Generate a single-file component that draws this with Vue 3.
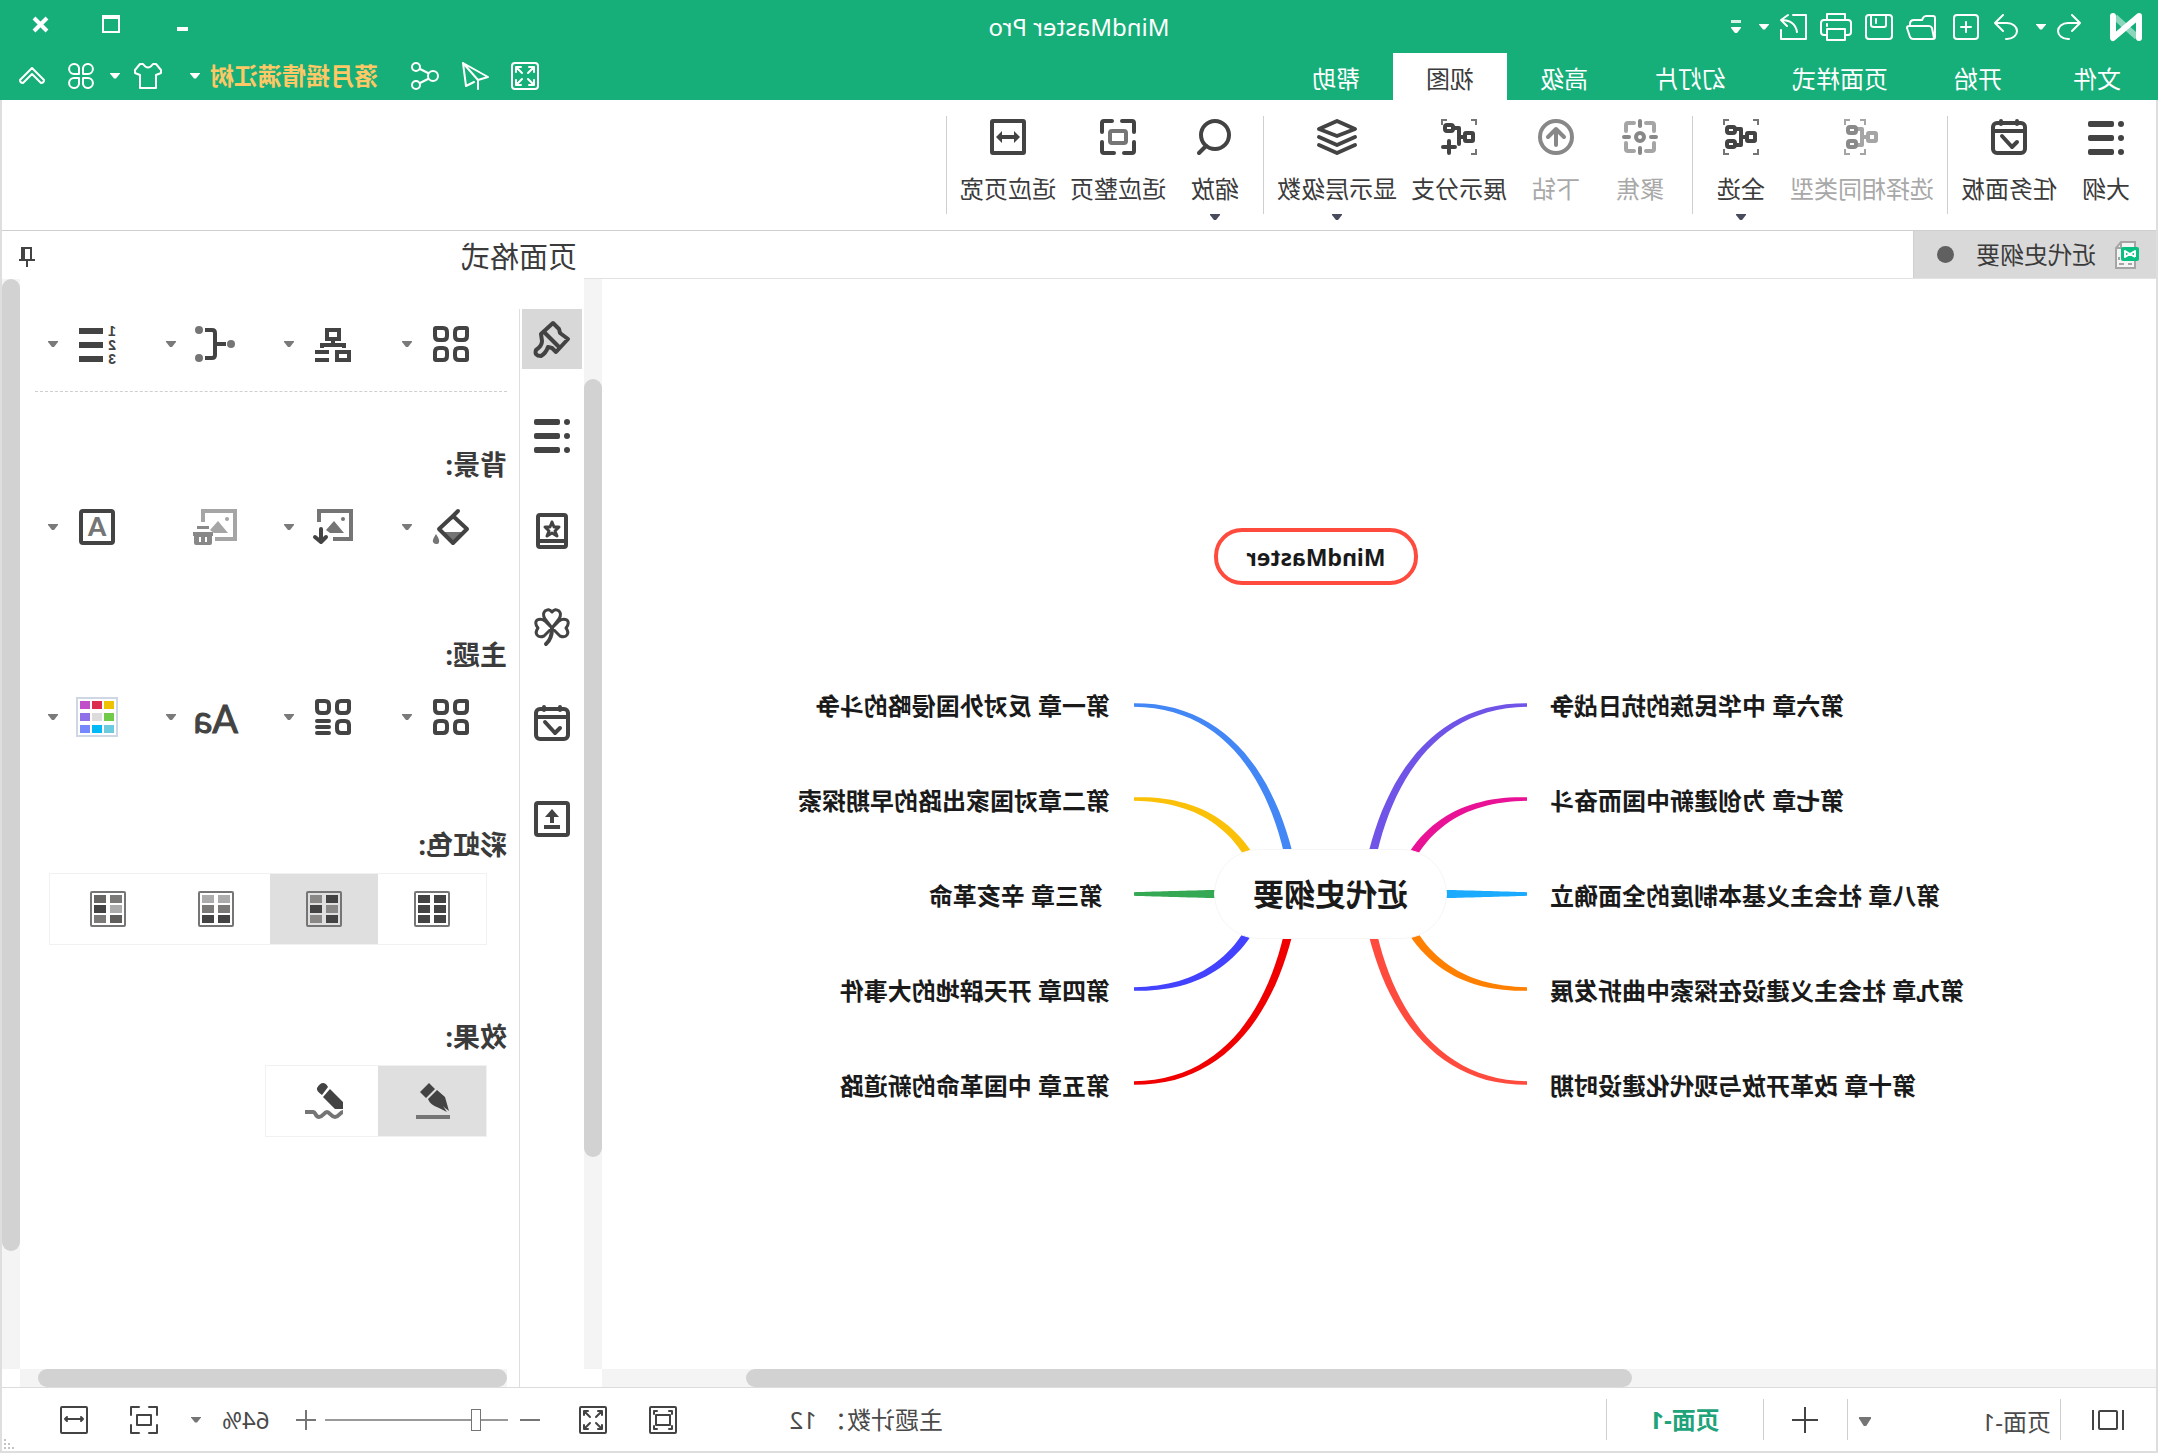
<script setup>
import { h, ref } from 'vue'

const dark = '#434343'
const mid = '#757575'

const stroke = (color, width, body) =>
  `<g fill="none" stroke="${color}" stroke-width="${width}" stroke-linecap="round" stroke-linejoin="round">${body}</g>`

const leaves = (skip) => {
  const cells = [
    'M3 2H10Q14 2 14 6V10Q14 14 10 14H6Q2 14 2 10V3Q2 2 3 2Z',
    'M33 2H26Q22 2 22 6V10Q22 14 26 14H30Q34 14 34 10V3Q34 2 33 2Z',
    'M3 34H10Q14 34 14 30V26Q14 22 10 22H6Q2 22 2 26V33Q2 34 3 34Z',
    'M33 34H26Q22 34 22 30V26Q22 22 26 22H30Q34 22 34 26V33Q34 34 33 34Z'
  ]
  return stroke(dark, 4, cells.slice(0, skip ? 3 : 4).map((d) => `<path d="${d}"/>`).join(''))
}

const outline =
  `<g fill="${dark}"><circle cx="3" cy="5" r="3"/><circle cx="3" cy="19" r="3"/><circle cx="3" cy="33" r="3"/>` +
  `<rect x="10" y="2" width="26" height="6" rx="2"/><rect x="10" y="16" width="26" height="6" rx="2"/><rect x="10" y="30" width="26" height="6" rx="2"/></g>`

const calendar =
  stroke(dark, 4, '<rect x="2" y="4" width="32" height="30" rx="4"/><path d="M2 12H34M10 2V5M26 2V5M10 23L15 28L25 17"/>')

const corners = (x0, color) =>
  `<path d="M${x0} 6V1H${x0 + 5}M30 1H35V6M35 30V35H30M${x0 + 5} 35H${x0}V30" fill="none" stroke="${color}" stroke-width="2"/>`

const branchNodes = (a, b) =>
  stroke(a, 4, '<rect x="4" y="14" width="8" height="8" rx="1"/><path d="M12 18H18M24 10H18V26H24"/>') +
  stroke(b, 4, '<rect x="24" y="8" width="8" height="6" rx="2"/><rect x="24" y="22" width="8" height="6" rx="2"/>')

const swatches = (colors) => {
  let s = `<rect x="1" y="1" width="34" height="34" rx="1" fill="none" stroke="${mid}" stroke-width="2"/>`
  colors.forEach((c, i) => {
    s += `<rect x="${4 + (i % 2) * 16}" y="${4 + Math.floor(i / 2) * 10}" width="12" height="8" fill="${c}"/>`
  })
  return s
}

const picture = (color, frame) =>
  `<path d="M34 13V2H2V30H${frame}" fill="none" stroke="${color}" stroke-width="4"/><circle cx="10" cy="10" r="2" fill="${color}"/><path d="M9 24L19 12L27 21L23 24Z" fill="${color}"/>`

const palette = ['#eec200', '#dc2c50', '#c04fc9', '#70cc48', '#dcdcdc', '#9070e8', '#6ccbdc', '#00b9f6', '#7788ff']

const icons = {
  logo: [32, 28, '<path d="M27 4L5 24" stroke="#fff" stroke-opacity=".5" stroke-width="6" fill="none"/><path d="M3 25V3L29 25V3" stroke="#fff" stroke-width="6" stroke-linejoin="round" stroke-linecap="round" fill="none"/>'],
  undo: [24, 26, stroke('#fff', 2, '<path d="M9 1L1 9L9 17M1 9H13C19 9 23 13 23 17S19 25 13 25H12"/>')],
  redo: [24, 26, stroke('#fff', 2, '<path d="M15 1L23 9L15 17M23 9H11C5 9 1 13 1 17S5 25 11 25H12"/>')],
  add: [26, 26, stroke('#fff', 2, '<rect x="1" y="1" width="24" height="24" rx="3"/><path d="M13 8V18M8 13H18"/>')],
  open: [30, 26, stroke('#fff', 2, '<path d="M1 23V4Q1 2 3 2H10Q12 2 13 4L14 6H22Q26 6 26 10V12M2 24L4 14Q5 12 7 12H27Q29 12 29 14L26 23Q25 25 23 25H3Q1 25 1 23"/>')],
  save: [28, 26, stroke('#fff', 2, '<rect x="1" y="1" width="26" height="24" rx="3"/><path d="M7 1V11Q7 13 9 13H19Q22 13 22 11V1M17 5V9"/>')],
  print: [32, 28, stroke('#fff', 2, '<path d="M7 7V1H25V7M7 22H4Q1 22 1 19V10Q1 7 4 7H28Q31 7 31 10V19Q31 22 28 22H25M7 16H25V27H7ZM25 11V13"/>')],
  share: [27, 26, stroke('#fff', 2, '<path d="M14 1H1V25H26V16M10 18Q12 6 26 6M19 1L26 6L20 12"/>')],
  min: [16, 18, '<rect y="12" width="11" height="4" fill="#fff"/>'],
  max: [18, 18, '<path d="M0 0H18V18H0ZM2 4V16H16V4Z" fill="#fff" fill-rule="evenodd"/>'],
  close: [18, 18, '<path d="M3 3L16 16M16 3L3 16" stroke="#fff" stroke-width="4"/>'],
  expand: [28, 28, stroke('#fff', 2, '<rect x="1" y="1" width="26" height="26" rx="3"/><path d="M5 10V5H10M5 5L11 11M18 5H23V10M23 5L17 11M5 18V23H10M5 23L11 17M23 18V23H18M23 23L17 17"/>')],
  send: [28, 30, stroke('#fff', 2, '<path d="M26 2L1 16L11 19V28M11 19L26 2L23 25L15 21"/>')],
  nodes: [28, 28, stroke('#fff', 2, '<circle cx="6" cy="14" r="5"/><circle cx="23" cy="5" r="4"/><circle cx="23" cy="23" r="4"/><path d="M11 11L19 7M11 17L19 21"/>')],
  shirt: [28, 26, stroke('#fff', 2, '<path d="M9 1Q14 8 19 1L22 1L27 7V10L22 12V25H6V12L1 10V7L6 1Z"/>')],
  petals: [28, 28, stroke('#fff', 2, '<path d="M12 12V6A5 5 0 1 0 7 12ZM16 12V6A5 5 0 1 1 21 12ZM12 16V22A5 5 0 1 1 7 16ZM16 16V22A5 5 0 1 0 21 16Z"/>')],
  fold: [26, 18, stroke('#fff', 2, '<path d="M13 1L25 13Q25 16 22 16L13 7L4 16Q1 16 1 13Z"/>')],
  outline: [36, 36, outline],
  calendar: [36, 36, calendar],
  same: [36, 36, corners(15, '#a5a5a5') + branchNodes('#a5a5a5', '#8a8a8a')],
  all: [36, 36, corners(1, mid) + branchNodes(dark, dark)],
  focus: [36, 36, stroke('#a5a5a5', 4, '<path d="M4 12V6Q4 4 6 4H12M24 4H30Q32 4 32 6V12M32 24V30Q32 32 30 32H24M12 32H6Q4 32 4 30V24"/>') + stroke('#888', 4, '<circle cx="18" cy="18" r="4"/><path d="M18 2V7M18 29V34M2 18H7M29 18H34"/>')],
  drill: [36, 36, stroke('#888', 4, '<circle cx="18" cy="18" r="16"/><path d="M18 26V10M10 18L18 10L26 18"/>')],
  branchAdd: [36, 36, '<path d="M1 6V1H6M30 1H35V6M6 35H1V30" fill="none" stroke="#757575" stroke-width="2"/>' + stroke(dark, 4, '<rect x="4" y="14" width="8" height="8" rx="1"/><rect x="24" y="6" width="8" height="6" rx="2"/><path d="M12 18H18M24 9H18V25M28 22V34M22 28H34"/>')],
  layers: [40, 36, stroke(dark, 4, '<path d="M20 2L38 10L20 17L2 10ZM2 18L20 26L38 18M2 26L20 34L38 26"/>')],
  zoom: [36, 36, stroke(dark, 4, '<circle cx="18" cy="16" r="14"/><path d="M27 27L34 34"/>')],
  fitPage: [36, 36, stroke(mid, 4, '<rect x="10" y="12" width="16" height="12" rx="2"/>') + stroke(dark, 4, '<path d="M2 13V4Q2 2 4 2H14M24 2H32Q34 2 34 4V13M34 23V32Q34 34 32 34H22M12 34H4Q2 34 2 32V23"/>')],
  fitWidth: [36, 36, `<rect x="2" y="2" width="32" height="32" rx="1" fill="none" stroke="${dark}" stroke-width="4"/><path d="M6 18L12 12V16H24V12L30 18L24 24V20H12V24Z" fill="${dark}"/>`],
  doc: [26, 28, '<path d="M4 1H18L23 7V27H4Z" fill="#f4f4f4" stroke="#a5a5a5" stroke-width="2"/><path d="M18 1V7H23M7 23H11M15 23H20M20 16V19" fill="none" stroke="#a5a5a5" stroke-width="2"/><rect y="6" width="18" height="14" rx="2" fill="#0abf83"/><path d="M4 16V10L14 16V10L4 16" fill="none" stroke="#fff" stroke-width="2" stroke-linejoin="round"/>'],
  pin: [16, 20, `<path d="M4 13V1H12V13M0 13H16M8 13V20" fill="none" stroke="${dark}" stroke-width="2"/><path d="M12 0V13" stroke="${dark}" stroke-width="4"/>`],
  brush: [38, 38, stroke(dark, 4, '<path d="M18 3L12 9L11 13L3 19L15 32L19 28L23 27Q25 33 30 36Q37 36 35 30Q29 26 29 21L30 14Z"/><path d="M27 12L12 27"/>')],
  book: [32, 36, stroke(dark, 4, '<rect x="2" y="2" width="28" height="32" rx="2"/><path d="M2 28H30"/>') + stroke(dark, 3, '<path d="M16 9L18 14L23 14L19 18L21 23L16 20L11 23L13 18L9 14L14 14Z"/>')],
  clover: [36, 38, stroke(dark, 3, '<path d="M18 20L11 11Q8 6 11 3Q15 0 18 4Q21 0 25 3Q28 6 25 11ZM18 20L10 28Q5 30 3 27Q1 24 4 20Q0 15 3 12Q7 10 11 13ZM18 20L26 28Q31 30 33 27Q35 24 32 20Q36 15 33 12Q29 10 25 13Z"/>') + stroke(dark, 4, '<path d="M18 20Q18 31 24 36"/>')],
  upload: [36, 36, stroke(dark, 4, '<rect x="2" y="2" width="32" height="32" rx="2"/>') + `<path d="M18 8L25 16H20V22H16V16H11ZM10 24H26V28H10Z" fill="${dark}"/>`],
  grid: [36, 36, leaves(false)],
  gridList: [36, 36, leaves(true) + stroke(dark, 4, '<path d="M22 22H34M22 28H34M22 34H34"/>')],
  org: [36, 36, `<path d="M12 4H24V13H12ZM2 26H14V34H2ZM18 13V19M7 22V19H29V22M22 26H36M22 34H36" fill="none" stroke="${dark}" stroke-width="4"/>`],
  bracket: [40, 36, `<g fill="${mid}"><circle cx="4" cy="18" r="4"/><circle cx="36" cy="4" r="4"/><circle cx="36" cy="32" r="4"/></g><path d="M9 18H20M30 4H23Q20 4 20 7V29Q20 32 23 32H30" fill="none" stroke="${dark}" stroke-width="4"/>`],
  numbers: [36, 40, `<g fill="${dark}"><rect x="12" y="4" width="24" height="6"/><rect x="12" y="18" width="24" height="6"/><rect x="12" y="32" width="24" height="6"/></g><g fill="${dark}" font-family="Liberation Sans, sans-serif" font-weight="700" font-size="14"><text x="-1" y="12">1</text><text x="-1" y="26">2</text><text x="-1" y="40">3</text></g>`],
  bucket: [38, 36, `<path d="M4 23H30L17 35Z" fill="${mid}"/><path d="M34 25Q38 31 37 33Q36 35 34 35Q31 35 31 33Q30 31 34 25Z" fill="${mid}"/>` + stroke(dark, 4, '<path d="M17 7L31 20L17 34L3 20ZM19 9L12 2"/>')],
  picDown: [40, 36, picture(mid, 20) + stroke(dark, 4, '<path d="M32 20V33M27 28L32 33L38 28"/>')],
  picTrash: [44, 36, picture('#a5a5a5', 22) + '<path d="M24 23H44V27H43V34Q43 36 41 36H27Q25 36 25 34V27H24ZM28 17H40V20H28Z" fill="#888"/><path d="M31 28V33M37 28V33" stroke="#fff" stroke-width="2"/>'],
  letter: [36, 36, stroke(dark, 4, '<rect x="2" y="2" width="32" height="32" rx="2"/>') + `<text x="18" y="27" text-anchor="middle" fill="${mid}" font-family="Lato, sans-serif" font-weight="900" font-size="26">A</text>`],
  font: [46, 36, `<text x="0" y="34" fill="${dark}" stroke="${dark}" font-family="Lato, sans-serif" font-weight="400" font-size="38">Aa</text>`],
  palette: [42, 40, '<rect x="1" y="1" width="40" height="38" fill="#fff" stroke="#cfd6e6" stroke-width="2"/>' + palette.map((c, i) => `<rect x="${4 + (i % 3) * 12}" y="${4 + Math.floor(i / 3) * 12}" width="10" height="8" fill="${c}"/>`).join('')],
  rb1: [36, 36, swatches([dark, dark, dark, dark, dark, dark])],
  rb2: [36, 36, swatches([dark, '#8a8787', '#8a8787', dark, dark, '#8a8787'])],
  rb3: [36, 36, swatches(['#acacac', '#acacac', '#7c7979', '#7c7979', dark, dark])],
  rb4: [36, 36, swatches(['#7c7979', '#686565', '#acacac', dark, '#605d5d', '#7c7979'])],
  pen: [36, 36, `<path d="M0 32H34V36H0Z" fill="${mid}"/><path d="M21 0L15 6L24 15L30 9ZM13 7L22 16Q20 22 11 25L3 29L7 23L5 25L1 28L5 14Z" fill="${dark}"/>`],
  pencil: [40, 36, `<path d="M21 0Q24 0 27 5Q28 8 22 12L16 4Q18 0 21 0ZM14 6L21 14L9 26H1V19Z" fill="${dark}"/><path d="M1 29C4 29 5 34 9 34S14 29 17 29S21 34 25 34S28 29 31 29H39" fill="none" stroke="${mid}" stroke-width="4"/>`],
  pages: [32, 22, `<path d="M1 1V21M31 1V21" stroke="${dark}" stroke-width="2"/><rect x="7" y="2" width="18" height="18" rx="1" fill="none" stroke="${dark}" stroke-width="2"/>`],
  plusBig: [26, 26, `<path d="M13 0V26M0 13H26" stroke="${dark}" stroke-width="2"/>`],
  minus: [20, 20, `<path d="M0 10H20" stroke="${mid}" stroke-width="2"/>`],
  plus: [20, 20, `<path d="M0 10H20M10 0V20" stroke="${mid}" stroke-width="2"/>`],
  sFit: [28, 28, stroke(dark, 2, '<rect x="1" y="1" width="26" height="26" rx="1"/><rect x="7" y="9" width="14" height="10"/><path d="M5 8V5H8M20 5H23V8M23 20V23H20M8 23H5V20"/>')],
  sFull: [28, 28, stroke(dark, 2, '<rect x="1" y="1" width="26" height="26" rx="1"/><path d="M5 9V5H9M5 5L11 11M19 5H23V9M23 5L17 11M5 19V23H9M5 23L11 17M23 19V23H19M23 23L17 17"/>')],
  sPage: [28, 28, stroke(dark, 2, '<path d="M1 9V1H9M19 1H27V9M27 19V27H19M9 27H1V19"/><rect x="7" y="9" width="14" height="10"/>')],
  sWidth: [28, 28, stroke(dark, 2, '<rect x="1" y="1" width="26" height="26" rx="1"/><path d="M5 13H23M7 11L5 13L7 15M21 11L23 13L21 15"/>')],
  grip: [10, 10, '<path d="M0 8H2V10H0ZM4 8H6V10H4ZM8 8H10V10H8ZM4 4H6V6H4ZM8 4H10V6H8ZM8 0H10V2H8Z" fill="#c4c4c4"/>']
}

// Small functional component that renders one icon from the table above.
const Icon = (props) => {
  const [w, ht, body] = icons[props.name]
  return h('svg', { class: 'icon', width: w, height: ht, viewBox: `0 0 ${w} ${ht}`, innerHTML: body, 'aria-hidden': 'true' })
}
Icon.props = ['name']

const menus = ['文件', '开始', '页面样式', '幻灯片', '高级', '视图', '帮助']
const activeMenu = ref('视图')

const ribbon = [
  [{ t: '大纲', i: 'outline' }, { t: '任务面板', i: 'calendar' }],
  [{ t: '选择相同类型', i: 'same', off: true }, { t: '全选', i: 'all', more: true }],
  [{ t: '聚焦', i: 'focus', off: true }, { t: '下钻', i: 'drill', off: true }, { t: '展示分支', i: 'branchAdd' }, { t: '显示层级数', i: 'layers', more: true }],
  [{ t: '缩放', i: 'zoom', more: true }, { t: '适应整页', i: 'fitPage' }, { t: '适应页宽', i: 'fitWidth' }]
]

const sideTools = [
  { i: 'brush', t: '格式' }, { i: 'outline', t: '列表' }, { i: 'book', t: '图标' },
  { i: 'clover', t: '剪贴画' }, { i: 'calendar', t: '任务' }, { i: 'upload', t: '导出' }
]
const layoutTools = [{ i: 'grid', more: true }, { i: 'org', more: true }, { i: 'bracket', more: true }, { i: 'numbers', more: true }]
const sections = [
  { title: '背景:', tools: [{ i: 'bucket', more: true }, { i: 'picDown', more: true }, { i: 'picTrash' }, { i: 'letter', more: true }] },
  { title: '主题:', tools: [{ i: 'grid', more: true }, { i: 'gridList', more: true }, { i: 'font', more: true }, { i: 'palette', more: true }] }
]
const rainbow = ref('rb2')
const effect = ref('pen')
const zoom = ref(64)

// Branch geometry on the free canvas, one entry per chapter.
const shapes = [
  [[670, 352], [690, 270], [738, 205], [824, 205]],
  [[710, 354], [736, 314], [775, 299], [824, 299]],
  [[740, 394], [770, 394], [800, 394], [824, 394]],
  [[710, 433], [736, 473], [775, 489], [824, 489]],
  [[670, 435], [690, 517], [738, 583], [824, 583]]
]
const flip = (pts) => pts.map(([x, y]) => [1255 - x, y])
const taper = (pts) => {
  const up = []
  const down = []
  for (let k = 0; k <= 24; k++) {
    const t = k / 24
    const s = 1 - t
    const at = (a) => s * s * s * pts[0][a] + 3 * s * s * t * pts[1][a] + 3 * s * t * t * pts[2][a] + t * t * t * pts[3][a]
    const d = (a) => s * s * (pts[1][a] - pts[0][a]) + 2 * s * t * (pts[2][a] - pts[1][a]) + t * t * (pts[3][a] - pts[2][a])
    const len = Math.hypot(d(0), d(1))
    const half = 4.2 - 2.4 * t
    const nx = (-d(1) / len) * half
    const ny = (d(0) / len) * half
    up.push(`${(at(0) + nx).toFixed(1)} ${(at(1) + ny).toFixed(1)}`)
    down.unshift(`${(at(0) - nx).toFixed(1)} ${(at(1) - ny).toFixed(1)}`)
  }
  return `M${up.join('L')}L${down.join('L')}Z`
}
const rightColors = ['#4287f5', '#fbc108', '#34a853', '#4242ff', '#f00000']
const leftColors = ['#7054e8', '#e91195', '#1aabff', '#ff7f00', '#ff4b3e']
const branches = [
  ...shapes.map((p, i) => ({ d: taper(p), fill: rightColors[i] })),
  ...shapes.map((p, i) => ({ d: taper(flip(p)), fill: leftColors[i] }))
]
const rowTop = [190, 285, 380, 475, 570]
const rightTopics = ['第一章 反对外国侵略的斗争', '第二章对国家出路的早期探索', '第三章 辛亥革命', '第四章 开天辟地的大事件', '第五章 中国革命的新道路']
const leftTopics = ['第六章 中华民族的抗日战争', '第七章 为创建新中国而奋斗', '第八章 社会主义基本制度的全面确立', '第九章 社会主义建设在探索中曲折发展', '第十章 改革开放与现代化建设时期']
</script>

<template>
  <div class="window">
    <header class="top">
      <div class="titlebar">
        <div class="quick">
          <Icon class="logo" name="logo" />
          <button aria-label="撤销"><Icon name="undo" /></button>
          <button class="drop" aria-label="撤销列表"><i class="caret"></i></button>
          <button aria-label="重做"><Icon name="redo" /></button>
          <button aria-label="新建"><Icon name="add" /></button>
          <div class="files">
            <button aria-label="打开"><Icon name="open" /></button>
            <button aria-label="保存"><Icon name="save" /></button>
            <button aria-label="打印"><Icon name="print" /></button>
            <button aria-label="导出"><Icon name="share" /></button>
          </div>
          <button class="drop" aria-label="导出列表"><i class="caret"></i></button>
          <button class="custom" aria-label="自定义"><i class="bar"></i><i class="caret"></i></button>
        </div>
        <h1>MindMaster Pro</h1>
        <div class="controls">
          <button aria-label="最小化"><Icon name="min" /></button>
          <button aria-label="最大化"><Icon name="max" /></button>
          <button aria-label="关闭"><Icon name="close" /></button>
        </div>
      </div>
      <div class="menubar">
        <nav>
          <button v-for="m in menus" :key="m" :class="{ on: m === activeMenu }" @click="activeMenu = m">{{ m }}</button>
        </nav>
        <div class="account">
          <button aria-label="全屏"><Icon name="expand" /></button>
          <button aria-label="发送"><Icon name="send" /></button>
          <button aria-label="分享"><Icon name="nodes" /></button>
          <button class="user">落月摇情满江树<i class="caret"></i></button>
          <button class="wide" aria-label="皮肤"><Icon name="shirt" /><i class="caret"></i></button>
          <button aria-label="应用"><Icon name="petals" /></button>
          <button aria-label="收起"><Icon name="fold" /></button>
        </div>
      </div>
    </header>

    <div class="frame">
      <div class="ribbon">
        <div v-for="(g, gi) in ribbon" :key="gi" class="group">
          <button v-for="b in g" :key="b.t" :disabled="b.off">
            <Icon :name="b.i" />
            <span>{{ b.t }}</span>
            <i v-if="b.more" class="caret"></i>
          </button>
        </div>
      </div>

      <div class="body">
        <main>
          <div class="docs">
            <button class="doc"><Icon name="doc" /><span>近代史纲要</span><i class="dot"></i></button>
          </div>
          <div class="work">
            <div class="canvas">
              <div class="map">
                <svg class="lines" width="1255" height="620" viewBox="0 0 1255 620">
                  <path v-for="b in branches" :key="b.fill" :d="b.d" :fill="b.fill" />
                </svg>
                <div class="node float">MindMaster</div>
                <div class="node core">近代史纲要</div>
                <div v-for="(t, i) in leftTopics" :key="t" class="topic left" :style="{ top: rowTop[i] + 'px' }">{{ t }}</div>
                <div v-for="(t, i) in rightTopics" :key="t" class="topic" :class="{ inset: i === 2 }" :style="{ top: rowTop[i] + 'px' }">{{ t }}</div>
              </div>
            </div>
            <div class="vbar"><div class="thumb canvas-v"></div></div>
          </div>
          <div class="hbar"><div class="thumb canvas-h"></div></div>
        </main>

        <aside>
          <div class="panel-head"><h2>页面格式</h2><button aria-label="固定"><Icon name="pin" /></button></div>
          <div class="panel">
            <div class="tools">
              <button v-for="(s, i) in sideTools" :key="s.t" :class="{ on: i === 0 }" :aria-label="s.t"><Icon :name="s.i" /></button>
            </div>
            <div class="sheet">
              <div class="options">
                <div class="row first">
                  <button v-for="o in layoutTools" :key="o.i" :aria-label="o.i"><span class="slot"><Icon :name="o.i" /></span><i v-if="o.more" class="caret"></i></button>
                </div>
                <section v-for="s in sections" :key="s.title">
                  <h3>{{ s.title }}</h3>
                  <div class="row">
                    <button v-for="o in s.tools" :key="o.i" :disabled="!o.more" :aria-label="o.i"><span class="slot"><Icon :name="o.i" /></span><i v-if="o.more" class="caret"></i></button>
                  </div>
                </section>
                <section class="choice">
                  <h3>彩虹色:</h3>
                  <div class="seg">
                    <button v-for="k in ['rb1', 'rb2', 'rb3', 'rb4']" :key="k" :class="{ on: k === rainbow }" :aria-label="k" @click="rainbow = k"><Icon :name="k" /></button>
                  </div>
                </section>
                <section class="choice">
                  <h3>效果:</h3>
                  <div class="seg">
                    <button v-for="k in ['pen', 'pencil']" :key="k" :class="{ on: k === effect }" :aria-label="k" @click="effect = k"><Icon :name="k" /></button>
                  </div>
                </section>
              </div>
              <div class="hbar sheet-bar"><div class="thumb"></div></div>
            </div>
            <div class="vbar last"><div class="thumb panel-v"></div></div>
          </div>
        </aside>
      </div>

      <footer>
        <button class="view" aria-label="页面视图"><Icon name="pages" /></button>
        <label class="picker">
          <select aria-label="页面"><option>页面-1</option></select>
          <i class="caret"></i>
        </label>
        <button class="new" aria-label="新建页面"><Icon name="plusBig" /></button>
        <button class="page">页面-1</button>
        <div class="count">主题计数： 12</div>
        <button class="fit" aria-label="适应窗口"><Icon name="sFit" /></button>
        <button class="full" aria-label="全屏"><Icon name="sFull" /></button>
        <button aria-label="缩小"><Icon name="minus" /></button>
        <input v-model="zoom" type="range" min="0" max="400" aria-label="缩放" />
        <button aria-label="放大"><Icon name="plus" /></button>
        <button class="percent">{{ zoom }}%<i class="caret"></i></button>
        <button class="fit" aria-label="整页"><Icon name="sPage" /></button>
        <button aria-label="页宽"><Icon name="sWidth" /></button>
        <Icon class="grip" name="grip" />
      </footer>
    </div>
  </div>
</template>

<style>
body {
  background: #fff;
}
#app {
  overflow: hidden;
}
</style>

<style scoped>
.window {
  display: flex;
  flex-direction: column;
  height: 100vh;
  transform: scaleX(-1);
  font: 24px/32px "Noto Sans", "Noto Sans CJK SC", sans-serif;
  color: #3b3b3b;
  background: #fff;
}
.window * {
  box-sizing: border-box;
}
button,
select {
  display: flex;
  align-items: center;
  justify-content: center;
  margin: 0;
  padding: 0;
  border: 0;
  background: none;
  font: inherit;
  color: inherit;
  white-space: nowrap;
}
h1,
h2,
h3 {
  margin: 0;
  font-size: 24px;
  font-weight: 400;
}
.icon {
  display: block;
  flex: none;
  overflow: visible;
}
.caret {
  flex: none;
  width: 10px;
  height: 6px;
  background: currentColor;
  clip-path: polygon(0 0, 100% 0, 100% 17%, 60% 100%, 40% 100%, 0 17%);
}

.top {
  flex: none;
  height: 100px;
  background: #16ae79;
  color: #fff;
}
.titlebar {
  display: grid;
  grid-template-columns: 1fr auto 1fr;
  align-items: center;
  height: 53px;
}
.quick {
  display: flex;
  align-items: center;
  gap: 15px;
  padding-left: 16px;
}
.logo {
  margin-right: 14px;
}
.files {
  display: flex;
  align-items: center;
  gap: 13px;
  padding-left: 2px;
}
.drop {
  margin: 0 3px 0 -4px;
}
.custom {
  flex-direction: column;
  gap: 4px;
}
.bar {
  width: 10px;
  height: 3px;
  background: #d5f0e5;
}
.controls {
  display: flex;
  justify-content: flex-end;
  gap: 52px;
  padding: 0 32px 6px 0;
}
.menubar {
  display: flex;
  justify-content: space-between;
}
nav {
  display: flex;
  padding-left: 4px;
}
nav button {
  height: 47px;
  padding: 4px 33px 0;
}
nav button:first-child {
  padding-right: 38px;
}
nav .on {
  background: #fff;
  color: #3b3b3b;
}
.account {
  display: flex;
  align-items: center;
  gap: 22px;
  padding: 0 19px 2px 0;
}
.user {
  gap: 10px;
  margin: 0 6px 0 11px;
  color: #fdc865;
  font-weight: 700;
}
.user .caret {
  color: #fff;
}
.wide {
  gap: 14px;
  margin-right: -7px;
}

.frame {
  display: flex;
  flex: 1;
  flex-direction: column;
  min-height: 0;
  border: solid #dedede;
  border-width: 0 2px 2px;
}
.ribbon {
  display: flex;
  flex: none;
  height: 131px;
  padding: 16px 0 16px 2px;
  border-bottom: 1px solid #cfcfcf;
}
.group {
  display: flex;
  padding: 0 6px;
  border-right: 1px solid #cfcfcf;
}
.group:nth-child(3) {
  padding-left: 10px;
}
.ribbon button {
  flex-direction: column;
  justify-content: flex-start;
  min-width: 84px;
  padding: 3px 7px 0;
}
.ribbon span {
  margin-top: 18px;
}
.ribbon .caret {
  margin-top: 9px;
  color: #474b5c;
}
.ribbon button:disabled {
  color: #a8a8a8;
}

.body {
  display: flex;
  flex: 1;
  min-height: 0;
}
main {
  display: flex;
  flex: 1;
  flex-direction: column;
  min-width: 0;
}
.docs {
  flex: none;
  height: 48px;
  border-bottom: 1px solid #e2e2e2;
  display: flex;
}
.doc {
  gap: 17px;
  padding: 0 23px 0 17px;
  background: #d9d9d9;
  border-right: 1px solid #d0d0d0;
}
.dot {
  width: 17px;
  height: 17px;
  margin-left: 5px;
  border-radius: 50%;
  background: #606060;
}
.work {
  display: flex;
  flex: 1;
  min-height: 0;
}
.canvas {
  position: relative;
  flex: 1;
  overflow: hidden;
}
.map {
  position: absolute;
  top: 221px;
  left: calc(50% - 579px);
  width: 1255px;
  height: 620px;
  color: #1a1a1a;
}
.lines {
  position: absolute;
  inset: 0;
}
.node {
  position: absolute;
  display: flex;
  align-items: center;
  justify-content: center;
  font-weight: 700;
  background: #fff;
}
.float {
  top: 28px;
  left: 540px;
  width: 204px;
  height: 57px;
  border: 4px solid #ff4b3e;
  border-radius: 28px;
  font-size: 23px;
}
.core {
  top: 349px;
  left: 511px;
  width: 233px;
  height: 90px;
  border: 1px solid #f6f6f6;
  border-radius: 45px;
  font-size: 31px;
}
.topic {
  position: absolute;
  left: 848px;
  font-weight: 700;
  white-space: nowrap;
}
.topic.inset {
  left: 855px;
}
.topic.left {
  right: 847px;
  left: auto;
}
.vbar {
  flex: none;
  width: 18px;
  background: #f4f4f4;
}
.hbar {
  flex: none;
  height: 18px;
  margin-right: 18px;
  background: #f4f4f4;
}
.thumb {
  border-radius: 9px;
  background: #d2d2d2;
}
.canvas-v {
  height: 778px;
  margin-top: 100px;
}
.canvas-h {
  width: 57%;
  height: 100%;
  margin-left: 524px;
}
.panel-v {
  height: 972px;
}

aside {
  display: flex;
  flex: none;
  flex-direction: column;
  width: 582px;
}
.panel-head {
  display: flex;
  flex: none;
  align-items: center;
  justify-content: space-between;
  height: 48px;
  padding: 4px 17px 0 7px;
}
h2 {
  font-size: 29px;
}
.panel {
  display: flex;
  flex: 1;
  min-height: 0;
}
.tools {
  display: flex;
  flex-direction: column;
  gap: 36px;
  margin-top: 30px;
  padding: 0 2px;
  border-right: 1px solid #dedede;
}
.tools button {
  width: 60px;
  height: 60px;
}
.tools .on {
  background: #d8d8d8;
}
.sheet {
  display: flex;
  flex: 1;
  flex-direction: column;
  min-width: 0;
}
.options {
  flex: 1;
  padding: 0 15px 0 12px;
}
.row {
  display: flex;
  align-items: center;
  height: 60px;
  padding-left: 38px;
}
.row button {
  flex: none;
  gap: 21px;
  justify-content: flex-start;
  width: 118px;
}
.row .caret {
  color: #7a7a7a;
}
.slot {
  display: flex;
  align-items: center;
  justify-content: center;
  width: 36px;
  height: 40px;
}
.row.first {
  height: 113px;
  padding-top: 18px;
  border-bottom: 1px dashed #cfcfcf;
}
section {
  height: 190px;
  padding-top: 55px;
}
.choice {
  height: 192px;
}
h3 {
  font-size: 27px;
  font-weight: 700;
  line-height: 36px;
}
section .row {
  margin-top: 14px;
}
.seg {
  display: inline-flex;
  height: 72px;
  margin: 10px 0 0 20px;
  padding-right: 4px;
  border: 1px solid #f1f1f1;
}
.seg button {
  width: 108px;
}
.seg .on {
  background: #dfdfdf;
}
.last {
  margin-bottom: 18px;
}
.sheet-bar {
  margin: 0 0 0 12px;
  padding-right: 18px;
}
.sheet-bar .thumb {
  height: 100%;
}

footer {
  position: relative;
  display: flex;
  flex: none;
  align-items: center;
  height: 64px;
  padding-right: 58px;
  border-top: 1px solid #dcdcdc;
  color: #4a4a4a;
}
.view,
.picker,
.new,
.page {
  height: 41px;
  border-right: 1px solid #cfcfcf;
}
.view {
  width: 96px;
}
.picker {
  display: flex;
  align-items: center;
  width: 213px;
  padding: 4px 11px 0 9px;
}
.picker select {
  flex: 1;
  appearance: none;
}
.picker .caret {
  width: 12px;
  height: 9px;
  color: #757575;
}
.new {
  width: 84px;
}
.page {
  width: 157px;
  color: #1fa37a;
  font-weight: 700;
}
.count {
  margin: 0 112px 0 auto;
}
.fit {
  margin-right: 42px;
}
.full {
  margin-right: 39px;
}
input {
  width: 183px;
  height: 22px;
  margin: 0 9px 0 12px;
  appearance: none;
  background: linear-gradient(#999, #999) center / 100% 2px no-repeat;
}
input::-webkit-slider-thumb {
  appearance: none;
  width: 10px;
  height: 22px;
  border: 1px solid #757575;
  background: #fff;
}
.percent {
  gap: 21px;
  margin: 0 33px 0 27px;
}
.percent .caret {
  color: #757575;
}
.grip {
  position: absolute;
  right: 2px;
  bottom: 2px;
}
</style>
